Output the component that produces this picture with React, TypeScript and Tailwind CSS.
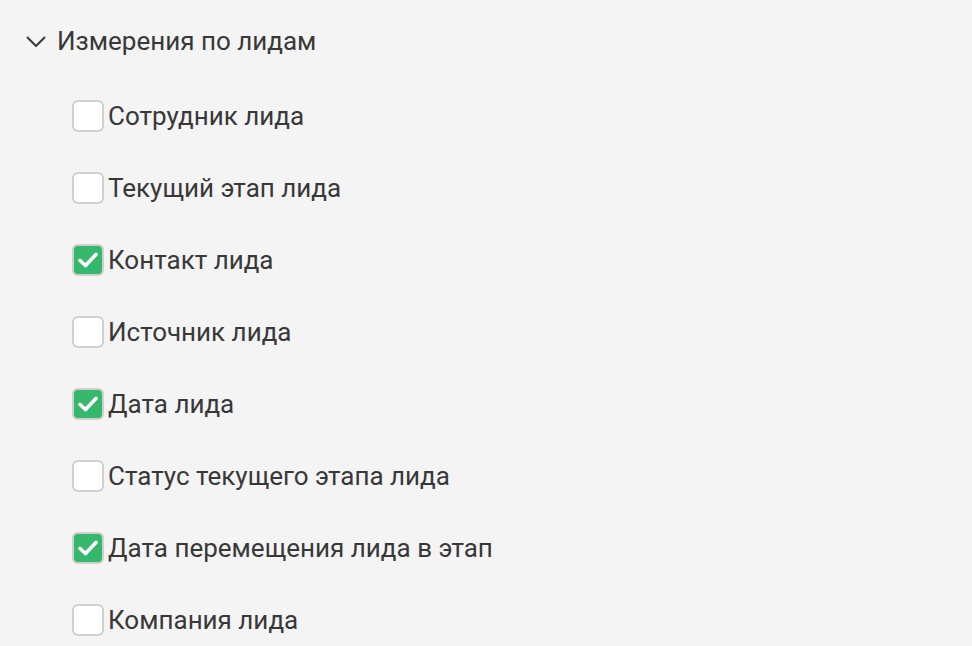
import React, { useState } from "react";

type Item = { id: number; label: string; checked: boolean };

const initialItems: Item[] = [
  { id: 1, label: "Сотрудник лида", checked: false },
  { id: 2, label: "Текущий этап лида", checked: false },
  { id: 3, label: "Контакт лида", checked: true },
  { id: 4, label: "Источник лида", checked: false },
  { id: 5, label: "Дата лида", checked: true },
  { id: 6, label: "Статус текущего этапа лида", checked: false },
  { id: 7, label: "Дата перемещения лида в этап", checked: true },
  { id: 8, label: "Компания лида", checked: false },
];

const App: React.FC = () => {
  const [items, setItems] = useState<Item[]>(initialItems);
  const [open, setOpen] = useState(true);

  const toggle = (id: number): void => {
    setItems((prev) =>
      prev.map((it) => (it.id === id ? { ...it, checked: !it.checked } : it))
    );
  };

  return (
    <div
      className="min-h-screen w-full bg-[#f4f4f4] text-[#383838] pt-[25px]"
      style={{ fontFamily: "Roboto, 'Noto Sans', sans-serif" }}
    >
      {/* Section header */}
      <button
        className="flex items-center h-8 pl-[26px] text-[26px] leading-8"
        onClick={() => setOpen(!open)}
      >
        <svg
          width="20"
          height="12"
          viewBox="0 0 20 12"
          fill="none"
          className={open ? "mt-[1px]" : "mt-[1px] -rotate-90"}
        >
          <path
            d="M1.5 1.5 L10 10 L18.5 1.5"
            stroke="#383838"
            strokeWidth="2"
            strokeLinecap="round"
            strokeLinejoin="round"
          />
        </svg>
        <span className="ml-[11px]">Измерения по лидам</span>
      </button>

      {open && (
        <ul className="mt-[23px] flex flex-col">
          {items.map((it) => (
            <li
              key={it.id}
              className="h-[72px] flex items-center pl-[72px] cursor-pointer"
              onClick={() => toggle(it.id)}
            >
              {it.checked ? (
                <span className="w-8 h-8 rounded-[6px] border-2 border-[#d0d0d0] bg-[#35b86c] flex items-center justify-center">
                  <svg width="22" height="18" viewBox="0 0 22 18" fill="none">
                    <path
                      d="M3 9.5 L8.5 14.5 L19 3.5"
                      stroke="#ffffff"
                      strokeWidth="3.6"
                      strokeLinecap="round"
                      strokeLinejoin="round"
                    />
                  </svg>
                </span>
              ) : (
                <span className="w-8 h-8 rounded-[6px] border-2 border-[#d0d0d0] bg-white" />
              )}
              <span className="ml-1 text-[26px] leading-8">{it.label}</span>
            </li>
          ))}
        </ul>
      )}
    </div>
  );
};

export default App;
